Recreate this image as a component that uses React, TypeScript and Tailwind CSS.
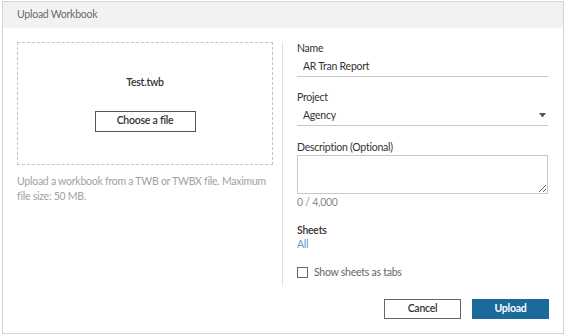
import React from 'react'

export default function App() {
  return (
    <div
      className="w-[565px] h-[335px] bg-white pt-[1px] pl-[2px] tracking-[-0.25px]"
      style={{ fontFamily: 'Lato, "Open Sans", sans-serif' }}
    >
      <div className="w-[562px] h-[333px] border border-[#d4d4d4] flex flex-col">
        <div className="h-[26px] bg-[#f2f2f2] flex items-center px-[14px] pb-[1px] text-[10.5px] text-[#6a6a6a]">
          Upload Workbook
        </div>

        <div className="flex flex-1 pt-[14px] pl-[14px] pr-[14px]">
          {/* left: drop zone */}
          <div className="w-[256px]">
            <div className="h-[123px] border border-dashed border-[#c4c4c4] flex flex-col items-center">
              <div className="mt-[32px] text-[10.5px] font-semibold text-[#333]">Test.twb</div>
              <button className="mt-[20px] w-[101px] h-[21px] border border-[#555] text-[10.5px] font-semibold text-[#333] bg-white">
                Choose a file
              </button>
            </div>
            <p className="mt-[9px] text-[10.5px] leading-[15px] text-[#a2a2a2]">
              Upload a workbook from a TWB or TWBX file. Maximum file size: 50 MB.
            </p>
          </div>

          <div className="w-px bg-[#e2e2e2] ml-[9px] mr-[14px] h-[244px]" />

          {/* right: form */}
          <div className="w-[251px] flex flex-col">
            <div className="text-[10.5px] text-[#333] leading-[13px]">Name</div>
            <div className="mt-[5px] h-[17px] border-b border-[#c8c8c8] pl-[6px] text-[10.5px] text-[#333] leading-[13px]">
              AR Tran Report
            </div>

            <div className="mt-[14px] text-[10.5px] text-[#333] leading-[13px]">Project</div>
            <div className="mt-[5px] h-[17px] border-b border-[#c8c8c8] pl-[6px] pr-[2px] flex justify-between text-[10.5px] text-[#333] leading-[13px]">
              <span>Agency</span>
              <svg width="7" height="5" viewBox="0 0 7 5" className="mt-[4px]">
                <path d="M0 0h7L3.5 4.5z" fill="#555" />
              </svg>
            </div>

            <div className="mt-[15px] text-[10.5px] text-[#333] leading-[13px]">Description (Optional)</div>
            <textarea className="mt-[1px] w-[251px] h-[39px] border border-[#c8c8c8] outline-none resize-y" />
            <div className="mt-[2px] text-[10.5px] text-[#8a8a8a] leading-[13px]">0 / 4,000</div>

            <div className="mt-[15px] text-[10.5px] font-semibold text-[#333] leading-[13px]">Sheets</div>
            <div className="mt-[1px] text-[10.5px] text-[#5f97c8] leading-[13px]">All</div>

            <div className="mt-[15px] flex items-center gap-[6px]">
              <div className="w-[11px] h-[11px] border border-[#666] bg-white" />
              <span className="text-[10.5px] text-[#666] leading-[13px]">Show sheets as tabs</span>
            </div>
          </div>
        </div>

        <div className="flex justify-end gap-[11px] pr-[14px] pb-[14px]">
          <button className="w-[77px] h-[20px] border border-[#666] bg-white text-[10.5px] font-semibold text-[#333]">
            Cancel
          </button>
          <button className="w-[77px] h-[20px] bg-[#1b6a9c] text-[10.5px] font-bold text-white">
            Upload
          </button>
        </div>
      </div>
    </div>
  )
}
